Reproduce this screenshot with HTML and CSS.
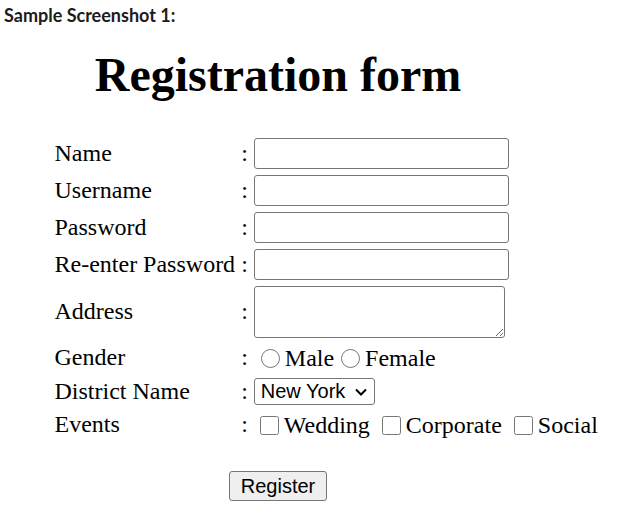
FILE: index.html
```html
<!DOCTYPE html>
<html>
<head>
<meta charset="utf-8">
<title>Registration form</title>
<link rel="stylesheet" href="styles.css">
</head>
<body>
<div class="caption">Sample Screenshot 1:</div>
<div class="page">
  <h1 class="title">Registration form</h1>
  <form class="form">
    <table class="grid">
      <tr>
        <td class="label">Name</td><td class="colon">:</td>
        <td><input class="text" type="text"></td>
      </tr>
      <tr>
        <td class="label">Username</td><td class="colon">:</td>
        <td><input class="text" type="text"></td>
      </tr>
      <tr>
        <td class="label">Password</td><td class="colon">:</td>
        <td><input class="text" type="password"></td>
      </tr>
      <tr>
        <td class="label">Re-enter Password</td><td class="colon">:</td>
        <td><input class="text" type="password"></td>
      </tr>
      <tr>
        <td class="label">Address</td><td class="colon">:</td>
        <td><textarea class="area"></textarea></td>
      </tr>
      <tr>
        <td class="label">Gender</td><td class="colon">:</td>
        <td class="choices"><input class="radio" type="radio" name="g">Male<input class="radio" type="radio" name="g">Female</td>
      </tr>
      <tr>
        <td class="label">District Name</td><td class="colon">:</td>
        <td>
          <div class="select-wrap">
            <select class="select"><option>New York</option><option>Boston</option></select>
            <svg class="chev" width="14" height="10" viewBox="0 0 14 10" aria-hidden="true"><path d="M2 2.5 L7 7.5 L12 2.5" fill="none" stroke="#000" stroke-width="2"/></svg>
          </div>
        </td>
      </tr>
      <tr>
        <td class="label">Events</td><td class="colon">:</td>
        <td class="choices"><input class="check" type="checkbox">Wedding <input class="check" type="checkbox">Corporate <input class="check" type="checkbox">Social</td>
      </tr>
    </table>
    <div class="actions">
      <button class="btn" type="button">Register</button>
    </div>
  </form>
</div>
</body>
</html>
```
FILE: styles.css
```css
html, body {
  margin: 0;
  padding: 0;
  background: #ffffff;
}

.caption {
  margin: 5px 0 0 4px;
  font-family: Lato, "Noto Sans", sans-serif;
  font-weight: 700;
  font-size: 18px;
  line-height: 20px;
  color: #1c1c1c;
}

.page {
  width: 556px;
  font-family: "Liberation Serif", "Times New Roman", serif;
  font-size: 24px;
  color: #000;
}

.title {
  margin: 22px 0 31px 0;
  text-align: center;
  font-size: 48px;
  line-height: 55px;
  font-weight: 700;
}

.form {
  margin: 0;
}

.grid {
  margin-left: 50px;
  border-collapse: separate;
  border-spacing: 3px;
  font-size: 24px;
  white-space: nowrap;
}

.grid td {
  padding: 1.5px;
  vertical-align: middle;
}

.colon {
  padding-left: 2.5px;
  padding-right: 3.5px;
}

.text {
  display: block;
  box-sizing: border-box;
  width: 255px;
  height: 31px;
  margin: 0;
  border: 1px solid #767676;
  border-radius: 3px;
  background: #fff;
}

.area {
  display: block;
  box-sizing: border-box;
  width: 251px;
  height: 52px;
  margin: 0;
  border: 1px solid #767676;
  border-radius: 3px;
  resize: both;
}

.choices {
  line-height: 28px;
}

.radio {
  width: 19px;
  height: 19px;
  margin: 4px 5px 0 7px;
  vertical-align: -2px;
}

.check {
  width: 19px;
  height: 19px;
  margin: 4px 5px 4px 6px;
  vertical-align: -2px;
}

.select-wrap {
  position: relative;
  width: 121px;
}

.select {
  display: block;
  box-sizing: border-box;
  width: 121px;
  height: 27px;
  margin: 0;
  font-family: "Liberation Sans", Arial, sans-serif;
  font-size: 20px;
  color: #000;
  border: 1px solid #767676;
  border-radius: 3px;
  background: #fff;
  padding: 0 2px 0 6px;
  -webkit-appearance: none;
  appearance: none;
}

.chev {
  position: absolute;
  right: 7px;
  top: 9px;
  pointer-events: none;
}

.actions {
  margin-top: 28px;
  text-align: center;
}

.btn {
  box-sizing: border-box;
  height: 30px;
  padding: 0 11px;
  font-family: "Liberation Sans", Arial, sans-serif;
  font-size: 20px;
  color: #000;
  background: #efefef;
  border: 1px solid #767676;
  border-radius: 3px;
}
```
